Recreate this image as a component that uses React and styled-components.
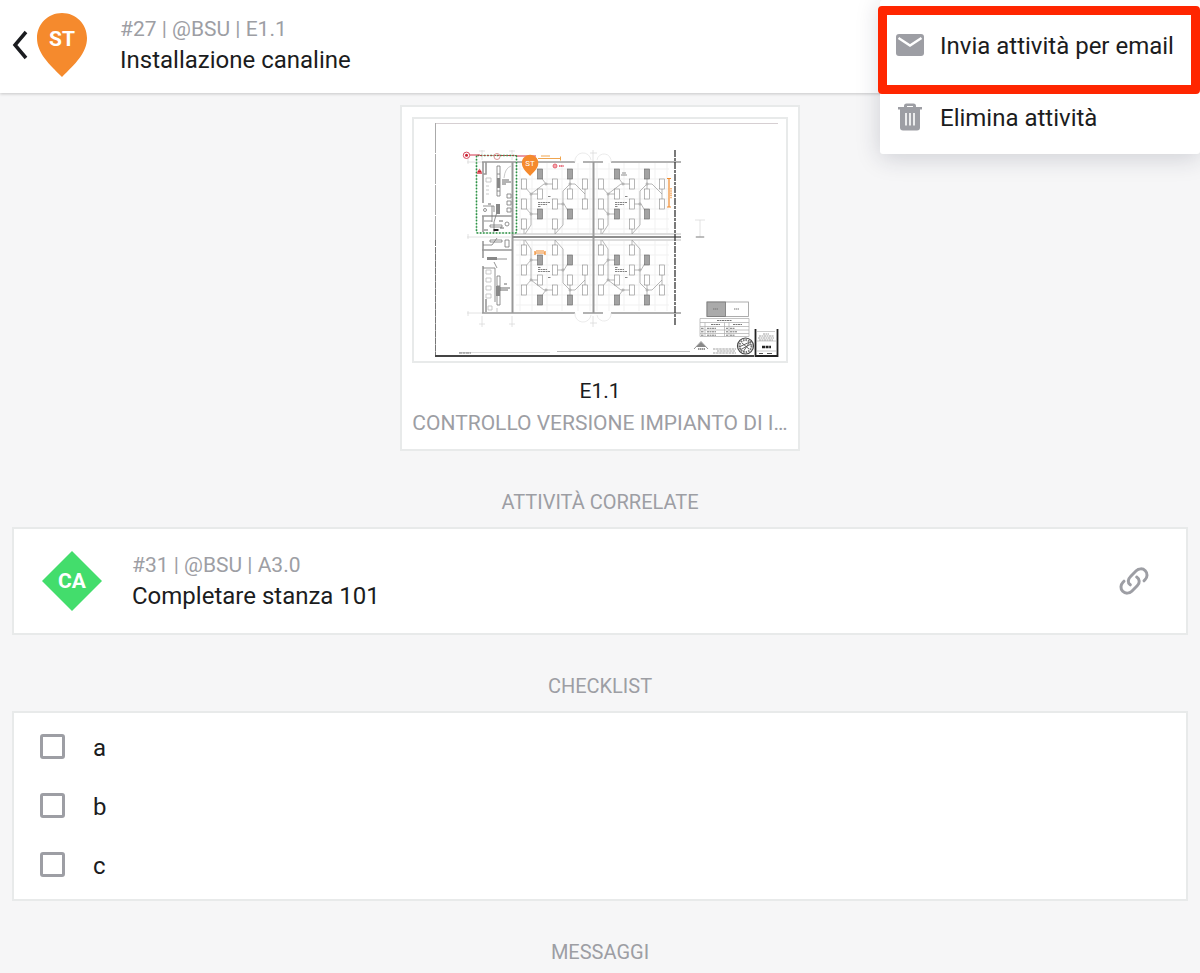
import React, { useState } from 'react';
import styled, { createGlobalStyle } from 'styled-components';

const GlobalStyle = createGlobalStyle`
	* {
		box-sizing: border-box;
	}
	body {
		margin: 0;
		background: #f6f6f7;
		color: #1b1c20;
		font-family: Roboto, 'Liberation Sans', sans-serif;
		font-size: 24px;
	}
	button {
		border: 0;
		padding: 0;
		background: none;
		color: inherit;
		font: inherit;
		text-align: left;
		cursor: pointer;
	}
`;

const Page = styled.div`
	position: relative;
	min-height: 100vh;
	overflow: hidden;
`;

const Header = styled.header`
	display: flex;
	align-items: center;
	height: 93px;
	padding: 0 12px 3px;
	background: #fff;
	box-shadow: 0 1px 3px rgba(0, 0, 0, 0.2);
`;

const IconButton = styled.button`
	display: flex;
	width: ${(props) => props.$width || 'auto'};
`;

const HeaderPin = styled.svg`
	width: 52px;
	height: 66px;
`;

const TaskText = styled.div`
	flex: 1;
	margin-left: ${(props) => props.$gap};
	line-height: 31px;
`;

const TaskMeta = styled.div`
	color: #9d9ea4;
	font-size: 21px;
`;

const TaskTitle = styled.h1`
	margin: 0;
	font-size: 24px;
	font-weight: 400;
`;

const Main = styled.main`
	padding: 12px;
`;

const SheetCard = styled.figure`
	width: 400px;
	max-width: 100%;
	margin: 0 auto;
	padding: 10px;
	border: 2px solid #e8eaea;
	background: #fff;
	text-align: center;
`;

const Plan = styled.svg`
	display: block;
	width: 100%;
	border: 2px solid #e8eaea;
`;

const SheetCaption = styled.figcaption`
	padding-top: 12px;
	font-size: 21px;
	line-height: 32px;
`;

const SheetName = styled.div`
	overflow: hidden;
	color: #9d9ea4;
	white-space: nowrap;
`;

const SectionTitle = styled.h2`
	margin: 0;
	padding: 39px 0 13px;
	color: #9d9ea4;
	font-size: 20px;
	font-weight: 400;
	line-height: 24px;
	text-align: center;
`;

const Card = styled.section`
	border: 2px solid #e8eaea;
	background: #fff;
`;

const RelatedTask = styled.div`
	display: flex;
	align-items: center;
	height: 104px;
	padding: 0 37px 0 26px;
`;

const Checklist = styled.ul`
	margin: 0;
	padding: 4px 26px 6px;
	list-style: none;
`;

const CheckItem = styled.li`
	display: flex;
	align-items: center;
	height: 58px;
	& + & {
		margin-top: 1px;
	}
`;

const CheckBox = styled.input`
	appearance: none;
	width: 25px;
	height: 25px;
	margin: 0 28px 0 0;
	border: 3px solid #9d9ea4;
	border-radius: 3px;
	background: #fff;
	&:checked {
		background: #9d9ea4;
	}
`;

const CheckLabel = styled.label`
	padding-top: 4px;
	line-height: 28px;
`;

const Menu = styled.div`
	position: absolute;
	top: 0;
	right: 0;
	width: 320px;
	padding-top: 10px;
	border-radius: 3px;
	background: #fff;
	box-shadow: 0 4px 24px rgba(30, 35, 60, 0.18);
`;

const MenuItem = styled.button`
	display: flex;
	align-items: center;
	gap: 14px;
	width: 100%;
	height: 72px;
	padding: 0 14px;
	white-space: nowrap;
	svg {
		flex: none;
	}
`;

const Highlight = styled.div`
	position: absolute;
	top: 6px;
	left: -2px;
	right: 0;
	height: 88px;
	border: 9px solid #ff2600;
	border-radius: 4px;
	pointer-events: none;
`;

const PIN = 'M26 1C12 1 1 12 1 26c0 15 12 26 25 39 13-13 25-24 25-39C51 12 40 1 26 1z';

const ROOMS = [
	{ x: 0, y: 0, flip: false },
	{ x: 77, y: 0, flip: false },
	{ x: 0, y: 474, flip: true },
	{ x: 77, y: 474, flip: true },
];

// ceiling lights of one room, by centre
const LIGHTS = [
	[524, 184], [524, 204], [524, 224],
	[555, 184], [555, 204], [555, 224],
	[585, 184], [585, 204],
	[540, 194], [570, 194],
];
const PANELS = [[540, 174], [570, 174], [540, 214], [570, 214]];
const GRID_X = [520, 532, 547, 562, 578, 590];
const GRID_Y = [169, 179, 189, 199, 209, 219, 229];

const Room = ({ x, y, flip }) => (
	<g transform={`translate(${x} ${y})${flip ? ' scale(1 -1)' : ''}`} fill='none'>
		<g stroke='#f1f1f1' strokeWidth='1'>
			{GRID_X.map((gx) => <path key={gx} d={`M${gx} 163V233`} />)}
			{GRID_Y.map((gy) => <path key={gy} d={`M516 ${gy}H592`} />)}
		</g>
		<path
			d='M524 186L531 194H540M531 194L544 184H555M540 176L546 184M524 206L531 214H538M531 194V225L525 234M555 204H564L570 214M570 174V184L563 191V225L555 234M570 184H575L585 194M570 194V184M524 224V234M555 224V234M585 184V204'
			stroke='#888'
			strokeWidth='0.6'
		/>
		<g fill='#fff' stroke='#888' strokeWidth='0.6'>
			{LIGHTS.map(([cx, cy]) => (
				<rect key={`${cx}-${cy}`} x={cx - 2.5} y={cy - 5} width='5' height='10' />
			))}
		</g>
		<g fill='#a3a3a3' stroke='#666' strokeWidth='0.6'>
			{PANELS.map(([cx, cy]) => (
				<rect key={`${cx}-${cy}`} x={cx - 2.5} y={cy - 5} width='5' height='10' />
			))}
		</g>
		<g fill='#fff' stroke='#777' strokeWidth='0.6'>
			<circle cx='531' cy='194' r='1' />
			<circle cx='546' cy='184' r='1' />
			<circle cx='570' cy='184' r='1' />
			<circle cx='531' cy='214' r='1' />
			<circle cx='563' cy='204' r='1' />
		</g>
		<path d='M538 202.5H550M538 204.5H547M538 206.5H541M548 196.5H551' stroke='#666' strokeWidth='0.8' strokeDasharray='2 0.5' />
	</g>
);

const FloorPlan = () => (
	<Plan viewBox='414 119 372 242' role='img' aria-label='E1.1'>
		<rect x='414' y='119' width='372' height='242' fill='#fff' />
		<g fill='none'>
			<path d='M435 123.500H778' stroke='#d6cfd2' />
			<path d='M435.500 123V355' stroke='#aaa' strokeDasharray='30 1' />
			<path d='M435.500 240V355' stroke='#777' strokeDasharray='6 1' />
			<path d='M459 352.500H550' stroke='#ddd' />
			<path d='M557 351.500H690' stroke='#bbb' />
			<path d='M459 353H471' stroke='#777' strokeDasharray='3 0.5' />
			<path d='M435 356H754' stroke='#444' strokeWidth='2' />
		</g>

		{ROOMS.map((room) => <Room key={`${room.x}-${room.y}`} {...room} />)}

		{/* walls */}
		<g fill='none' stroke='#999' strokeWidth='1.6'>
			<path d='M482 162H575M583 162H603M611 162H681M482 313H575M583 313H603M611 313H681' />
			<path d='M512.500 162V313M593.500 162V313' strokeWidth='2' />
			<path d='M482 216H512M482 250H512M483 162V203M483 216V232M483 241V258M483 266V313' />
			<path d='M486 162V174H483M486 299V312' />
			<path d='M512 237H681' stroke='#8d8d8d' strokeWidth='2' />
			<path d='M512 234H681M512 240H681' stroke='#aaa' strokeWidth='0.8' />
		</g>
		<path d='M675 150V325' fill='none' stroke='#333' strokeWidth='1.3' strokeDasharray='7 1 3 1' />
		<g fill='none' stroke='#dadada' strokeWidth='0.8'>
			<path d='M467 162H482M467 237H512M467 313H482M482 150V160M512 150V160M593 150V161M482 316V327M512 316V327M593 316V327' />
			<path d='M479 151H485M509 151H515M590 153H597M479 324H485M509 324H515M590 323H597M468 159V164M468 234V239M468 311V316' />
			<path d='M575 162A8 8 0 0 1 591 160M597 160A7 7 0 0 1 611 162M575 313A8 8 0 0 0 591 315M597 315A7 7 0 0 0 611 313' stroke='#e6e6e6' />
			<path d='M700 220V237M695 220H705M695 237H705' />
		</g>
		<path d='M696 237H704' stroke='#888' />

		{/* service rooms on the left side */}
		<g fill='none' stroke='#777' strokeWidth='0.8'>
			<path d='M497 166H500V196H497zM497 174H500M497 191H500M497 276H500V305H497zM497 286H500M492 206V222M483 206H494V212M484 221H492M497 212L494 222V232M483 245H492L497 238M487 259H507M494 262L497 268M483 268H495V302M507 194H511V198H507zM507 201H511V205H507zM507 208H511V212H507zM505 240H509V247H505z' />
			<path d='M490 240H502V242H490zM490 225H502V227H490z' />
			<circle cx='485' cy='210' r='1.500' />
			<circle cx='507' cy='224' r='2' />
		</g>
		<g fill='none' stroke='#bbb' strokeWidth='0.8'>
			<path d='M486 178H491V182H486zM486 186H489M486 190H489M486 194H489M504 178Q505 168 511 166M486 270H491V274H486zM486 278H491V282H486zM486 286H491V290H486zM486 294H491V298H486zM488 306H492V310H488zM497 312V308' />
		</g>
		<g fill='#888'>
			<rect x='497' y='178' width='3' height='10' />
			<rect x='496' y='204' width='4' height='10' />
			<rect x='496' y='286' width='4' height='10' />
			<rect x='487' y='257' width='10' height='3' />
		</g>
		<g stroke='#444' strokeWidth='0.8' fill='none'>
			<path d='M502 180H509M502 182H511M502 184H506M500 288H510M500 290H508M484 230H488M494 230H498M488 204H491M499 221H503M504 284H507M500 228H504' />
			<path d='M621 175H627M622 173H626' strokeWidth='0.6' />
		</g>
		<rect x='493.500' y='229' width='5' height='2' fill='#222' />

		{/* annotations */}
		<rect x='476.500' y='155.500' width='40' height='77.500' rx='1' fill='none' stroke='#c2e4c6' strokeWidth='1' />
		<rect x='476.500' y='155.500' width='40' height='77.500' rx='1' fill='none' stroke='#2b8f46' strokeWidth='1.6' strokeDasharray='1.6 1.6' />
		<path d='M470 155H480M517 156H536' fill='none' stroke='#d3344c' strokeWidth='1.200' />
		<path d='M480 155.500H516' stroke='#b04040' strokeWidth='1' strokeDasharray='2 1.500' />
		<circle cx='466.500' cy='155.300' r='3.200' fill='#fff' stroke='#d3344c' strokeWidth='0.900' />
		<circle cx='466.500' cy='155.300' r='1.500' fill='#c9202f' />
		<circle cx='497' cy='156.500' r='3' fill='none' stroke='#d68080' strokeWidth='0.800' />
		<path d='M477 172L479.500 168.500L482 172V174H477z' fill='#e2727b' />
		<path d='M478 171.500H481' stroke='#c9202f' strokeWidth='1.500' />
		<circle cx='555' cy='166' r='2' fill='#f5a3aa' stroke='#e04f60' strokeWidth='0.800' />
		<path d='M559 166H564' stroke='#e04f60' strokeWidth='1.600' strokeDasharray='1.300 0.400' />
		<path d='M538 158.500H561M560.500 156.500V160.500M541 156H550' stroke='#efa550' strokeWidth='1' fill='none' />
		<g stroke='#f08a2c' strokeWidth='1.200' fill='none'>
			<path d='M669 178V207M667 178.500H671M667 207H671M535 253H545M536 251H544M535 251V255M545 251V255' />
			<path d='M671 188V199' strokeDasharray='1.500 0.700' />
		</g>
		<g transform='translate(521.500 154.500) scale(0.330)'>
			<path d={PIN} fill='#f58a2d' />
			<text x='26' y='34' textAnchor='middle' fontSize='24' fill='#fff'>ST</text>
		</g>

		{/* title block */}
		<rect x='707' y='302' width='41.500' height='14.500' fill='#fff' stroke='#999' strokeWidth='0.800' />
		<rect x='707' y='302' width='18.500' height='14.500' fill='#aaa' stroke='#777' strokeWidth='0.800' />
		<path d='M713 309H718M734 309H739' stroke='#777' strokeDasharray='1.500 0.500' />
		<g fill='none' stroke='#aaa' strokeWidth='0.700'>
			<path d='M700 318.500H749V336.500H700zM700 322.500H749M724.500 322.500V336.500M700 326.500H749M700 330H749M700 333.500H749M705 322.500V336.500M729 322.500V336.500' />
		</g>
		<path d='M717 320.500H732M711 324.500H720M733 324.500H742M701 328.300H704M707 328.300H716M726 328.300H728M730 328.300H735M701 331.800H704M707 331.800H716M726 331.800H728M730 331.800H737M701 335.200H704M707 335.200H716M726 335.200H728M730 335.200H735' stroke='#777' strokeWidth='1' strokeDasharray='2 0.500' />
		<path d='M694 349L701 341.500L708 349' fill='none' stroke='#777' strokeWidth='0.800' />
		<path d='M696 347H706L701 342z' fill='#888' />
		<path d='M698 349H705' stroke='#333' strokeWidth='1.200' strokeDasharray='1.500 0.500' />
		<path d='M713 349H736M717 351H735M713 353H736' stroke='#888' strokeWidth='0.800' strokeDasharray='2.500 0.600' />
		<circle cx='745.500' cy='346' r='8' fill='#fff' stroke='#444' strokeWidth='1.200' />
		<circle cx='745.500' cy='346' r='6' fill='none' stroke='#777' strokeWidth='2' strokeDasharray='1.500 1' />
		<path d='M739 347L752 341M740 350L751 344M743 352L749 343M742 343L749 349' stroke='#555' strokeWidth='0.900' />
		<path d='M755.500 329V356H777.500V329' fill='none' stroke='#222' strokeWidth='1.800' />
		<path d='M757 331.500H775M757 341H776M757 351H776' stroke='#aaa' strokeWidth='0.600' />
		<path d='M763 334H769M759 336H774M758 338H774M759 340H773' stroke='#888' strokeWidth='0.800' strokeDasharray='2 0.500' />
		<path d='M762 347H771' stroke='#222' strokeWidth='2.400' strokeDasharray='3 0.600' />
		<path d='M759 353.500H763M767 353.500H772' stroke='#555' strokeWidth='1' />
	</Plan>
);

const MailIcon = () => (
	<svg width='32' height='32' viewBox='0 0 32 32' aria-hidden='true'>
		<rect x='2' y='4' width='28' height='22' rx='3' fill='#9d9ea4' />
		<path d='M4.500 8L16 15.500L27.500 8' fill='none' stroke='#fff' strokeWidth='2.400' />
	</svg>
);

const TrashIcon = () => (
	<svg width='32' height='32' viewBox='0 0 32 32' aria-hidden='true'>
		<path d='M10 5V4a2.500 2.500 0 0 1 2.500-2.500h7A2.500 2.500 0 0 1 22 4v1h6v2.500H4V5zM13 5h6V4h-6z' fill='#9d9ea4' fillRule='evenodd' />
		<path d='M6 7h20v18.500a3 3 0 0 1-3 3H9a3 3 0 0 1-3-3z' fill='#9d9ea4' />
		<path d='M12 11V23.500M16 11V23.500M20 11V23.500' stroke='#fff' strokeWidth='1.600' />
	</svg>
);

const LinkIcon = () => (
	<svg width='30' height='30' viewBox='0 0 30 30' fill='none' stroke='#9d9ea4' strokeWidth='3' strokeLinecap='round' aria-hidden='true'>
		<path d='M5 15.200L4 16.200C1.500 18.700 1.200 22.700 3.700 25.300C6.200 27.800 10.300 27.700 12.800 25.200L18.200 19.800C21.200 16.800 20.700 13 17.700 11' />
		<path d='M25 14.800L26 13.800C28.500 11.300 28.800 7.300 26.300 4.700C23.800 2.200 19.700 2.300 17.200 4.800L11.800 10.200C8.800 13.200 8.300 16.500 11.300 18.800' />
	</svg>
);

const TaskInfo = ({ meta, title, gap }) => (
	<TaskText $gap={gap}>
		<TaskMeta>{meta}</TaskMeta>
		<TaskTitle>{title}</TaskTitle>
	</TaskText>
);

const ITEMS = ['a', 'b', 'c'];

const App = () => {
	const [checked, setChecked] = useState({});
	const toggle = (item) => setChecked({ ...checked, [item]: !checked[item] });

	return (
		<Page>
			<GlobalStyle />
			<Header>
				<IconButton aria-label='Indietro' $width='24px'>
					<svg width='16' height='30' viewBox='0 0 16 30'>
						<path d='M14 2L3 15L14 28' fill='none' stroke='#1b1c20' strokeWidth='3.500' />
					</svg>
				</IconButton>
				<HeaderPin viewBox='0 0 52 66'>
					<path d={PIN} fill='#f58a2d' />
					<text x='26' y='34' textAnchor='middle' fontSize='21' fontWeight='700' fill='#fff'>ST</text>
				</HeaderPin>
				<TaskInfo meta='#27 | @BSU | E1.1' title='Installazione canaline' gap='32px' />
			</Header>

			<Main>
				<SheetCard>
					<FloorPlan />
					<SheetCaption>
						<div>E1.1</div>
						<SheetName>CONTROLLO VERSIONE IMPIANTO DI I…</SheetName>
					</SheetCaption>
				</SheetCard>

				<SectionTitle>ATTIVITÀ CORRELATE</SectionTitle>
				<Card>
					<RelatedTask>
						<svg width='64' height='64' viewBox='0 0 64 64'>
							<path d='M32 2L62 32L32 62L2 32z' fill='#43dd6c' />
							<text x='32' y='39' textAnchor='middle' fontSize='21' fontWeight='700' fill='#fff'>CA</text>
						</svg>
						<TaskInfo meta='#31 | @BSU | A3.0' title='Completare stanza 101' gap='28px' />
						<IconButton aria-label='Collega'>
							<LinkIcon />
						</IconButton>
					</RelatedTask>
				</Card>

				<SectionTitle>CHECKLIST</SectionTitle>
				<Card>
					<Checklist>
						{ITEMS.map((item) => (
							<CheckItem key={item}>
								<CheckBox
									type='checkbox'
									id={`check-${item}`}
									checked={!!checked[item]}
									onChange={() => toggle(item)}
								/>
								<CheckLabel htmlFor={`check-${item}`}>{item}</CheckLabel>
							</CheckItem>
						))}
					</Checklist>
				</Card>

				<SectionTitle>MESSAGGI</SectionTitle>
			</Main>

			<Menu>
				<MenuItem>
					<MailIcon />
					Invia attività per email
				</MenuItem>
				<MenuItem>
					<TrashIcon />
					Elimina attività
				</MenuItem>
				<Highlight />
			</Menu>
		</Page>
	);
};

export default App;
